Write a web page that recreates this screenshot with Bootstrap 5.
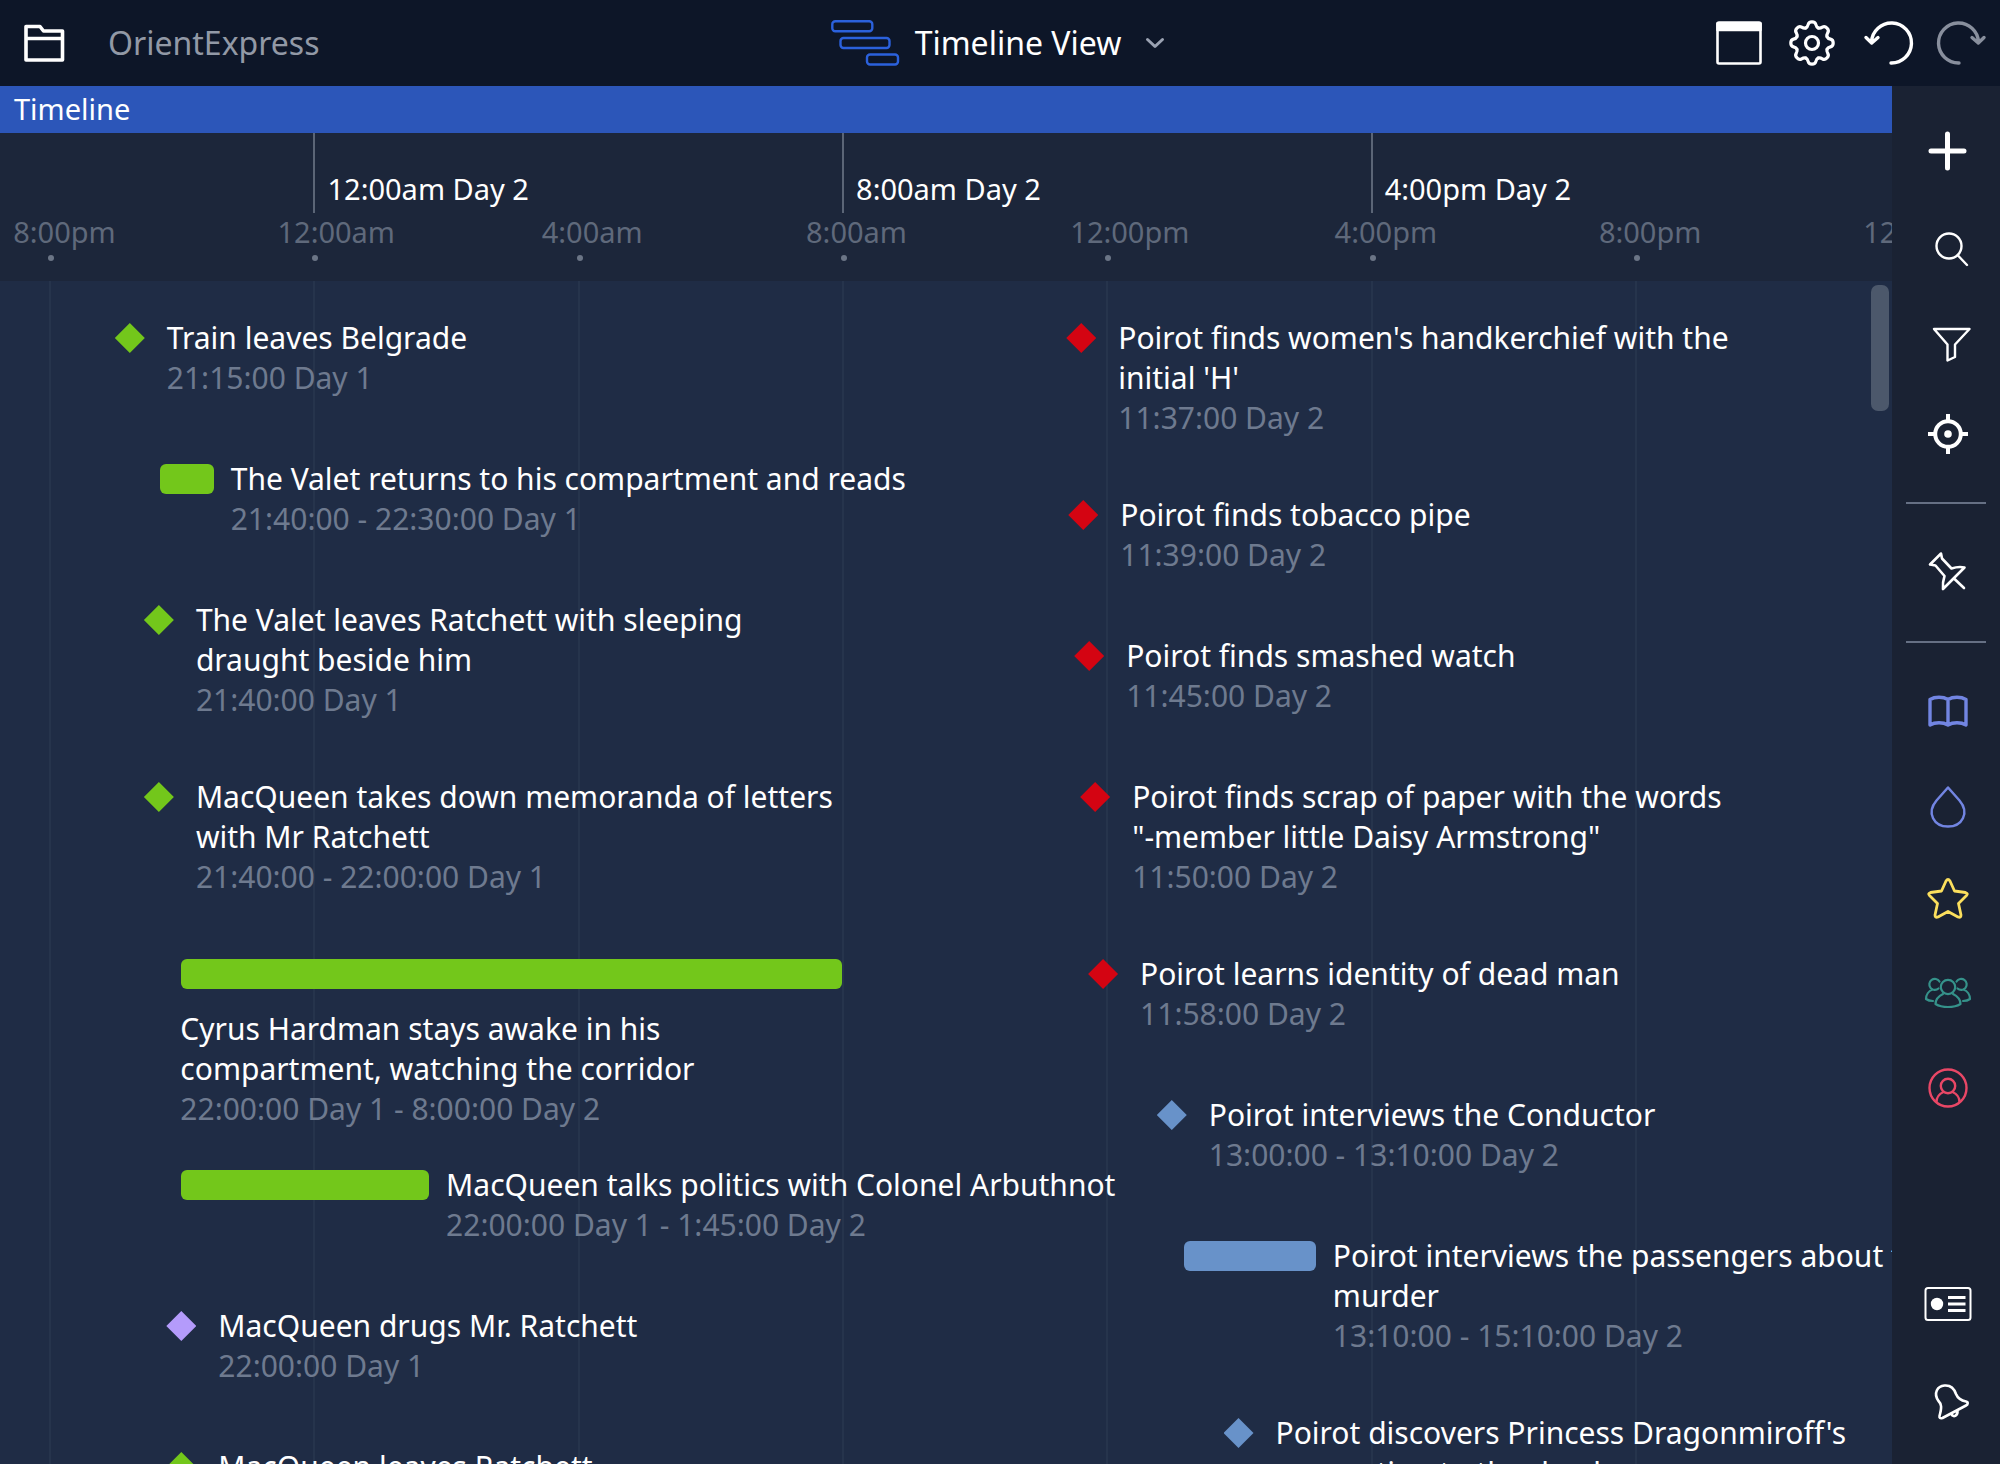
<!DOCTYPE html>
<html lang="en">
<head>
<meta charset="utf-8">
<meta name="viewport" content="width=device-width, initial-scale=1">
<title>OrientExpress – Timeline View</title>
<link href="https://cdn.jsdelivr.net/npm/bootstrap@5.3.0/dist/css/bootstrap.min.css" rel="stylesheet">
<style>
  :root {
    --origin: 2.6%;
    --hour: 3.4923%;
    --four-hours: 13.969%;
    --eight-hours: 27.938%;
  }
  body {
    font-family: "Noto Sans", "Open Sans", sans-serif;
    font-size: 29px;
    line-height: 40px;
    color: #fff;
    background: #1f2c45;
  }
  .topbar { height: 86px; background: #0d1628; }
  .topbar-side { flex: 1 1 0; }
  .project-link { color: #9299a6; font-size: 32px; padding-left: 38px; }
  .view-picker { font-size: 32px; line-height: 40px; }
  .view-glyph { color: #2b61dc; }
  .view-caret { color: #9aa2b2; }
  .tool { border: 0; background: none; padding: 0; display: flex; align-items: center; justify-content: center; color: #fff; }
  .tool:disabled { color: #888f9d; }
  .tool-top { width: 74px; height: 86px; }
  .tool-side { width: 100%; height: 94px; }
  .tool-foot { width: 100%; height: 98px; }
  svg { display: block; flex: none; overflow: visible; fill: none; stroke: currentColor; stroke-linecap: round; stroke-linejoin: round; }
  svg .flat { stroke-linecap: butt; }
  svg .solid { fill: currentColor; }
  svg .dot { fill: currentColor; stroke: none; }

  .workspace, .timeline, .board { min-height: 0; min-width: 0; }
  .band { height: 47px; line-height: 46px; padding-left: 14px; background: #2c56b9; }
  .axis { height: 148px; background: #1c263a; overflow: hidden; }
  .major-row { display: flex; height: 80px; }
  .major-tick { width: var(--eight-hours); flex: none; border-left: 2px solid #5b6576; padding: 36px 0 0 12px; }
  .major-tick:first-child { margin-left: calc(var(--origin) + var(--four-hours)); }
  .minor-row { display: flex; }
  .minor-row > :first-child, .lines > :first-child { margin-left: var(--origin); }
  .minor-tick { width: var(--four-hours); flex: none; color: #5f697b; white-space: nowrap; }
  .minor-tick span { display: block; margin-left: -36px; line-height: 38px; }
  .minor-tick::after { content: ""; display: block; width: 6px; height: 6px; border-radius: 50%; background: #6b7586; margin: 4px 0 0 -1px; }

  .board { display: grid; background: #1f2c45; overflow: hidden; }
  .board > .layer { grid-area: 1 / 1; min-width: 0; min-height: 0; }
  .lines { display: flex; }
  .lines i { width: var(--four-hours); flex: none; border-left: 2px solid #26344c; }
  .lane { padding-top: 37px; white-space: nowrap; font-size: 30px; }
  .event { display: flex; align-items: flex-start; height: 141px; }
  .event.tall { height: 177px; }
  .event.below { height: 211px; flex-direction: column; }
  .event h2 { font-size: 30px; line-height: 40px; font-weight: 400; margin: 0; }
  .event time { color: #6e7a8f; display: block; }
  .point { flex: none; width: 30px; height: 30px; margin: 5px 22px 0 calc(var(--origin) + var(--t) * var(--hour) - 15px); clip-path: polygon(50% 0, 100% 50%, 50% 100%, 0 50%); background: currentColor; }
  .span { flex: none; width: calc(var(--d) * var(--hour)); height: 30px; border-radius: 6px; margin: 5px 17px 0 calc(var(--origin) + var(--t) * var(--hour)); background: currentColor; }
  .below .span { margin-bottom: 20px; }
  .below .event-text { margin-left: calc(var(--origin) + var(--t) * var(--hour) - 1px); }
  .c-green { color: #73c71b; }
  .c-violet { color: #b49bfb; }
  .c-red { color: #d40412; }
  .c-blue { color: #6892c9; }

  .scroll-thumb { position: absolute; top: 4px; right: 3px; width: 18px; height: 126px; border-radius: 7px; background: #4c586b; }
  .sidebar { width: 108px; flex: none; background: #1a2233; padding: 19px 0 12px; }
  .sidebar hr { width: 80px; margin: 21px 0 22px; border: 0; border-top: 2px solid #667084; opacity: 1; align-self: center; }
  .t-indigo { color: #7285e2; }
  .t-yellow { color: #fbdf5d; }
  .t-teal { color: #35928a; }
  .t-rose { color: #e94766; }
</style>
</head>
<body>
<div class="d-flex flex-column vh-100 overflow-hidden">
  <header class="topbar d-flex align-items-center flex-shrink-0">
    <div class="topbar-side d-flex align-items-center">
      <button class="tool ms-3" aria-label="Open project">
        <svg width="54" height="60" viewBox="-28 -30 54 60" stroke-width="3.600"><path d="M-18-16.500H-4L-.5-12H18.500V17H-18ZM-18-4.500H18.500"/></svg>
      </button>
      <a class="project-link text-decoration-none" href="#">OrientExpress</a>
    </div>
    <button class="tool view-picker" aria-haspopup="true">
      <svg class="view-glyph" width="68" height="46" viewBox="0 0 68 46" stroke-width="2.400"><rect x="1.300" y="1.300" width="40" height="10" rx="3"/><rect x="9.500" y="18" width="49" height="10" rx="3"/><rect x="36" y="34.500" width="31" height="10" rx="3"/></svg>
      <span class="ps-3 pe-4">Timeline View</span>
      <svg class="view-caret" width="20" height="20" viewBox="0 0 20 20" stroke-width="3"><path d="M2.500 6.500 10 13.500l7.500-7"/></svg>
    </button>
    <div class="topbar-side d-flex justify-content-end pe-1">
      <button class="tool tool-top" aria-label="Window">
        <svg width="60" height="60" viewBox="-32 -30 60 60" stroke-width="2.600"><rect x="-21.500" y="-20.500" width="43" height="41" rx="1.500"/><path class="solid" d="M-21.500-19.500h43v6.500h-43z"/></svg>
      </button>
      <button class="tool tool-top" aria-label="Settings">
        <svg width="60" height="60" viewBox="-31 -30 60 60" stroke-width="3.200">
          <defs><path id="cog" d="M-6.200-15.100Q-4.500-15.800-3.850-18.500-3.200-21.200 0-21.200 3.200-21.200 3.850-18.500 4.500-15.800 6.200-15.100"/></defs>
          <use href="#cog"/><use href="#cog" transform="rotate(45)"/><use href="#cog" transform="rotate(90)"/><use href="#cog" transform="rotate(135)"/><use href="#cog" transform="rotate(180)"/><use href="#cog" transform="rotate(225)"/><use href="#cog" transform="rotate(270)"/><use href="#cog" transform="rotate(315)"/>
          <circle r="6.500"/>
        </svg>
      </button>
      <button class="tool tool-top" aria-label="Undo">
        <svg width="60" height="60" viewBox="-36 -30 60 60" stroke-width="3.400"><path d="M0 20A20 20 0 1 0-19.500-1M-25-5.500-19.300 0-13-5.500"/></svg>
      </button>
      <button class="tool tool-top" aria-label="Redo" disabled>
        <svg width="60" height="60" viewBox="-30 -30 60 60" stroke-width="3.400"><path d="M0 20A20 20 0 1 1 19.500-1M25-5.500 19.300 0 13-5.500"/></svg>
      </button>
    </div>
  </header>

  <div class="workspace d-flex flex-grow-1">
    <main class="timeline d-flex flex-column flex-grow-1">
      <div class="band flex-shrink-0">Timeline</div>
      <div class="axis flex-shrink-0">
        <div class="major-row">
          <div class="major-tick">12:00am Day 2</div>
          <div class="major-tick">8:00am Day 2</div>
          <div class="major-tick">4:00pm Day 2</div>
        </div>
        <div class="minor-row">
          <div class="minor-tick"><span>8:00pm</span></div>
          <div class="minor-tick"><span>12:00am</span></div>
          <div class="minor-tick"><span>4:00am</span></div>
          <div class="minor-tick"><span>8:00am</span></div>
          <div class="minor-tick"><span>12:00pm</span></div>
          <div class="minor-tick"><span>4:00pm</span></div>
          <div class="minor-tick"><span>8:00pm</span></div>
          <div class="minor-tick"><span>12:00am</span></div>
        </div>
      </div>
      <div class="board flex-grow-1 position-relative">
        <div class="layer lines"><i></i><i></i><i></i><i></i><i></i><i></i><i></i></div>
        <section class="layer lane">
          <article class="event" style="--t:1.22"><div class="point c-green"></div><div class="event-text"><h2>Train leaves Belgrade</h2><time>21:15:00 Day 1</time></div></article>
          <article class="event" style="--t:1.67;--d:.82"><div class="span c-green"></div><div class="event-text"><h2>The Valet returns to his compartment and reads</h2><time>21:40:00 - 22:30:00 Day 1</time></div></article>
          <article class="event tall" style="--t:1.66"><div class="point c-green"></div><div class="event-text"><h2>The Valet leaves Ratchett with sleeping<br>draught beside him</h2><time>21:40:00 Day 1</time></div></article>
          <article class="event tall" style="--t:1.66"><div class="point c-green"></div><div class="event-text"><h2>MacQueen takes down memoranda of letters<br>with Mr Ratchett</h2><time>21:40:00 - 22:00:00 Day 1</time></div></article>
          <article class="event below" style="--t:2;--d:10"><div class="span c-green"></div><div class="event-text"><h2>Cyrus Hardman stays awake in his<br>compartment, watching the corridor</h2><time>22:00:00 Day 1 - 8:00:00 Day 2</time></div></article>
          <article class="event" style="--t:2;--d:3.75"><div class="span c-green"></div><div class="event-text"><h2>MacQueen talks politics with Colonel Arbuthnot</h2><time>22:00:00 Day 1 - 1:45:00 Day 2</time></div></article>
          <article class="event" style="--t:2"><div class="point c-violet"></div><div class="event-text"><h2>MacQueen drugs Mr. Ratchett</h2><time>22:00:00 Day 1</time></div></article>
          <article class="event" style="--t:2"><div class="point c-green"></div><div class="event-text"><h2>MacQueen leaves Ratchett</h2></div></article>
        </section>
        <section class="layer lane">
          <article class="event tall" style="--t:15.62"><div class="point c-red"></div><div class="event-text"><h2>Poirot finds women's handkerchief with the<br>initial 'H'</h2><time>11:37:00 Day 2</time></div></article>
          <article class="event" style="--t:15.65"><div class="point c-red"></div><div class="event-text"><h2>Poirot finds tobacco pipe</h2><time>11:39:00 Day 2</time></div></article>
          <article class="event" style="--t:15.74"><div class="point c-red"></div><div class="event-text"><h2>Poirot finds smashed watch</h2><time>11:45:00 Day 2</time></div></article>
          <article class="event tall" style="--t:15.83"><div class="point c-red"></div><div class="event-text"><h2>Poirot finds scrap of paper with the words<br>"-member little Daisy Armstrong"</h2><time>11:50:00 Day 2</time></div></article>
          <article class="event" style="--t:15.95"><div class="point c-red"></div><div class="event-text"><h2>Poirot learns identity of dead man</h2><time>11:58:00 Day 2</time></div></article>
          <article class="event" style="--t:16.99"><div class="point c-blue"></div><div class="event-text"><h2>Poirot interviews the Conductor</h2><time>13:00:00 - 13:10:00 Day 2</time></div></article>
          <article class="event tall" style="--t:17.17;--d:2"><div class="span c-blue"></div><div class="event-text"><h2>Poirot interviews the passengers about the<br>murder</h2><time>13:10:00 - 15:10:00 Day 2</time></div></article>
          <article class="event" style="--t:18"><div class="point c-blue"></div><div class="event-text"><h2>Poirot discovers Princess Dragonmiroff's<br>connection to the dead</h2></div></article>
        </section>
        <div class="scroll-thumb"></div>
      </div>
    </main>

    <nav class="sidebar d-flex flex-column" aria-label="Tools">
      <button class="tool tool-side" aria-label="Add"><svg width="60" height="60" viewBox="-32 -29 60 60" stroke-width="5"><path d="M-17 0H16M-.5-17V17"/></svg></button>
      <button class="tool tool-side" aria-label="Search"><svg width="60" height="60" viewBox="-33 -34 60 60" stroke-width="2.400"><circle cx="0" cy="-4" r="12.500"/><path d="M9 5.500 18 15"/></svg></button>
      <button class="tool tool-side" aria-label="Filter"><svg width="60" height="60" viewBox="-34 -35 60 60" stroke-width="2.400"><path d="M-16-16H19.500L5-.5V12L-2.500 15.500V-.5Z"/></svg></button>
      <button class="tool tool-side" aria-label="Centre"><svg width="60" height="60" viewBox="-32 -30 60 60" stroke-width="4"><circle r="12.800"/><circle class="dot" r="3.800"/><path class="flat" d="M-20 0h6M14 0h6M0-20v6M0 14v6"/></svg></button>
      <hr>
      <button class="tool tool-side" aria-label="Pin"><svg width="60" height="60" viewBox="-32 -28 60 60" stroke-width="2.600"><path d="M-7-17.500-18-6.500-12.500-5.500-3.500 5C-5 9.500-5.500 13-5 18L16.500-3.500C12-4.500 8-4 3.500-2.500L-6-12.500ZM6 7.500 16 17"/></svg></button>
      <hr>
      <button class="tool tool-side t-indigo" aria-label="Notebook"><svg width="60" height="60" viewBox="-32 -30 60 60" stroke-width="3.400"><path d="M0-12.500C-5-15.500-13-15.500-18-12.500V13C-13 10-5 10 0 13 5 10 13 10 18 13V-12.500C13-15.500 5-15.500 0-12.500V13"/></svg></button>
      <button class="tool tool-side t-indigo" aria-label="Colour"><svg width="60" height="60" viewBox="-32 -31 60 60" stroke-width="2.500"><path d="M0-19.500 11.500-6.500C22 6 14 19.500 0 19.500S-22 6-11.500-6.500Z"/></svg></button>
      <button class="tool tool-side t-yellow" aria-label="Favourites"><svg width="60" height="60" viewBox="-32 -29 60 60" stroke-width="2.800"><path d="M-2-18Q0-21 2-18L6.500-8 17.500-6.500Q20.500-5.500 18.500-3.500L10.500 4.500 13 16Q13 19 10 18L0 12.500-10 18Q-13 19-13 16L-10.500 4.500-18.500-3.500Q-20.500-5.500-17.500-6.500L-6.500-8Z"/></svg></button>
      <button class="tool tool-side t-teal" aria-label="Groups"><svg width="60" height="60" viewBox="-32 -29 60 60" stroke-width="2.200"><circle cy="-6" r="7.200"/><path d="M-5 1C-10 3.500-12.500 7.500-12.500 11-6 15 6 15 12.500 11 12.500 7.500 10 3.500 5 1M-8.500-11.500A5.500 5.500 0 1 0-9.500-4.500M-15.500-3.500C-19.500-2-22 2-22 6-20 7.500-17.500 8-15 8M8.500-11.500A5.500 5.500 0 1 1 9.500-4.500M15.500-3.500C19.500-2 22 2 22 6 20 7.500 17.500 8 15 8"/></svg></button>
      <button class="tool tool-side t-rose" aria-label="Person"><svg width="60" height="60" viewBox="-32 -30 60 60" stroke-width="2.400"><circle r="18.500"/><circle cy="-2" r="7.200"/><path d="M-4.500 4C-9 6-11.500 9.500-11.500 14M4.500 4C9 6 11.500 9.500 11.500 14"/></svg></button>
      <button class="tool tool-foot mt-auto" aria-label="Inspector"><svg width="60" height="60" viewBox="-32 -29 60 60" stroke-width="2"><rect x="-22.500" y="-16" width="45" height="32" rx="2.500"/><circle class="dot" cx="-11" r="6.200"/><path class="flat" stroke-width="2.800" d="M0-6.500H17.500M0 0H17.500M0 6.500H17.500"/></svg></button>
      <button class="tool tool-foot" aria-label="Notifications"><svg width="60" height="60" viewBox="-32 -29 60 60" stroke-width="2.600"><path d="M-8.500 14C-6 5-6.500 2-9.500-1-15-9-10.500-16-3.500-16.500 2-17 6-14 8-8 10-3 13-1.500 18-.5 20.500 0 20 2.500 18 3.500L-5.500 16Q-9 17-8.500 14ZM3.500 12C5 16 10 14 9.500 8.500"/></svg></button>
    </nav>
  </div>
</div>
<script src="https://cdn.jsdelivr.net/npm/bootstrap@5.3.0/dist/js/bootstrap.bundle.min.js"></script>
</body>
</html>
